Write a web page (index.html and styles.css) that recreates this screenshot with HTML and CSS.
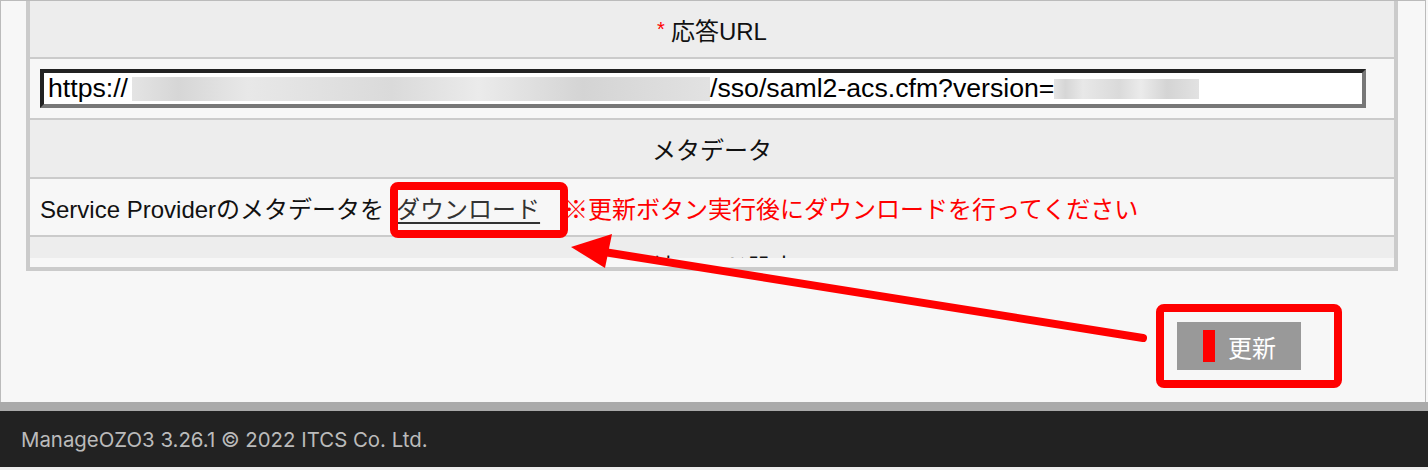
FILE: index.html
```html
<!DOCTYPE html>
<html lang="ja">
<head>
    <meta charset="UTF-8">
    <title>ManageOZO3 - SAML設定</title>
    <link rel="stylesheet" href="styles.css">
</head>
<body>
    <div class="screen">
        <div class="panel">
            <div class="rows">
                <div class="row head"><span class="req">*</span> 応答URL</div>
                <div class="row body url-row">
                    <div class="url-field">https://<span class="blur blur-host"></span>/sso/saml2-acs.cfm?version=<span class="blur blur-ver"></span></div>
                </div>
                <div class="row head">メタデータ</div>
                <div class="row body">
                    Service Providerのメタデータを <a class="dl" href="#">ダウンロード</a><span class="note">※更新ボタン実行後にダウンロードを行ってください</span>
                </div>
                <div class="row head">接続モード設定</div>
            </div>
        </div>

        <div class="actions">
            <button class="btn-update"><span class="bar"></span>更新</button>
        </div>
    </div>

    <footer class="footer">ManageOZO3 3.26.1 © 2022 ITCS Co. Ltd.</footer>

    <!-- annotation marks drawn over the screenshot -->
    <svg class="marks" width="1428" height="470" viewBox="0 0 1428 470">
        <rect x="394" y="186" width="170" height="48" rx="4" fill="none" stroke="#ff0000" stroke-width="8"/>
        <rect x="1160" y="308" width="178" height="76" rx="4" fill="none" stroke="#ff0000" stroke-width="8"/>
        <line x1="1143" y1="338" x2="604" y2="252" stroke="#ff0000" stroke-width="8" stroke-linecap="round"/>
        <polygon points="571,247 612,234 605,268" fill="#ff0000"/>
    </svg>
</body>
</html>
```

FILE: styles.css
```css
body {
    margin: 0;
    background: #f7f7f7;
    font-family: "Liberation Sans", "Noto Sans CJK JP", sans-serif;
    font-size: 24px;
    color: #111;
    position: relative;
    width: 1428px;
    height: 470px;
    overflow: hidden;
}

.screen {
    width: 1426px;
    height: 402px;
    box-sizing: border-box;
    border: 1px solid #bbb;
    border-bottom: none;
}

.panel {
    margin-left: 25px;
    width: 1372px;
    box-sizing: border-box;
    border: 4px solid #cbcbcb;
    border-top: none;
    padding-bottom: 9px;
    background: #f7f7f7;
}

.rows {
    height: 257px;
    overflow: hidden;
}

.row {
    border-bottom: 2px solid #cbcbcb;
    display: flex;
    align-items: center;
    box-sizing: content-box;
}

.head {
    background: #ededed;
    justify-content: center;
    height: 57px;
}

.head:first-child {
    height: 56px;
}

.body {
    background: #f7f7f7;
    padding: 0 10px;
    height: 56px;
}

.req {
    color: #ff0000;
    font-size: 20px;
    align-self: flex-start;
    margin-top: 17px;
    margin-right: 6px;
}

/* URL field */
.url-row {
    height: 59px;
}

.url-field {
    width: 1326px;
    height: 39px;
    box-sizing: border-box;
    background: #fff;
    border-style: solid;
    border-width: 4px;
    border-color: #222 #777 #777 #222;
    padding-left: 4px;
    font-size: 26.67px;
    display: flex;
    align-items: center;
    white-space: nowrap;
    color: #000;
}

.blur {
    display: inline-block;
    height: 24px;
    background: linear-gradient(90deg, #e4e4e4 0%, #d6d6d6 8%, #e8e8e8 20%, #dadada 45%, #ebebeb 60%, #d4d4d4 78%, #e2e2e2 100%);
}

.blur-host {
    width: 578px;
    margin-left: 4px;
}

.blur-ver {
    width: 145px;
    height: 20px;
}

/* Metadata row */
.dl {
    color: #333;
    text-decoration: underline;
    text-underline-offset: 4px;
    margin-left: 12px;
}

.note {
    color: #ff0000;
    margin-left: 24px;
}

/* Update button */
.actions {
    display: flex;
    justify-content: flex-end;
    padding-top: 51px;
    padding-right: 124px;
}

.btn-update {
    width: 124px;
    height: 48px;
    background: #999;
    border: none;
    color: #fff;
    font-family: inherit;
    font-size: 24px;
    display: flex;
    align-items: center;
    padding: 0 0 0 26px;
    gap: 13px;
}

.bar {
    width: 12px;
    height: 32px;
    background: #ff0000;
}

/* Footer */
.footer {
    border-top: 9px solid #aaa;
    border-bottom: 3px solid #eee;
    background: #222;
    height: 56px;
    box-sizing: content-box;
    display: flex;
    align-items: center;
    padding-left: 21px;
    color: #bbb;
    font-family: Inter, "Liberation Sans", sans-serif;
    font-size: 20.4px;
}

.marks {
    position: absolute;
    top: 0;
    left: 0;
    pointer-events: none;
}
```
